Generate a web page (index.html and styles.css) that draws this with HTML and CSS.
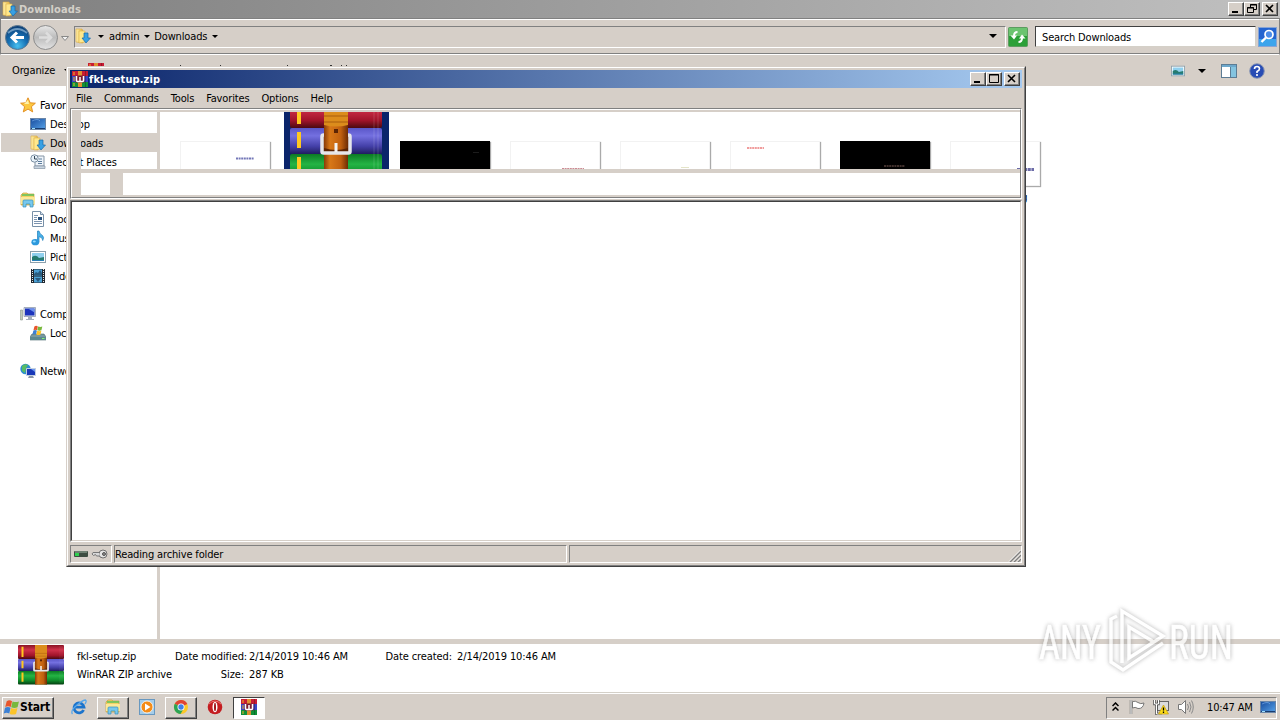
FILE: index.html
```html
<!DOCTYPE html>
<html lang="en">
<head>
    <meta charset="UTF-8">
    <meta name="viewport" content="width=device-width, initial-scale=1.0">
    <title>Downloads</title>
    <link rel="stylesheet" href="styles.css">
</head>
<body>
    <!-- shared icons -->
    <svg class="defs" width="0" height="0">
        <defs>
            <linearGradient id="gRed" x1="0" y1="0" x2="0" y2="1"><stop offset="0" stop-color="#8a1424"/><stop offset=".35" stop-color="#d0304a"/><stop offset=".75" stop-color="#a0142a"/><stop offset="1" stop-color="#4a0a10"/></linearGradient>
            <linearGradient id="gBlue" x1="0" y1="0" x2="0" y2="1"><stop offset="0" stop-color="#5a56c8"/><stop offset=".3" stop-color="#7470e0"/><stop offset=".7" stop-color="#4440a8"/><stop offset="1" stop-color="#201c60"/></linearGradient>
            <linearGradient id="gGreen" x1="0" y1="0" x2="0" y2="1"><stop offset="0" stop-color="#0c7a24"/><stop offset=".35" stop-color="#24b444"/><stop offset=".7" stop-color="#0e8a2a"/><stop offset="1" stop-color="#053c10"/></linearGradient>
            <linearGradient id="gBelt" x1="0" y1="0" x2="1" y2="0"><stop offset="0" stop-color="#8a3c08"/><stop offset=".25" stop-color="#d87818"/><stop offset=".7" stop-color="#c06010"/><stop offset="1" stop-color="#6e2c04"/></linearGradient>
            <linearGradient id="gFold" x1="0" y1="0" x2="1" y2="0"><stop offset="0" stop-color="#fff0a8"/><stop offset="1" stop-color="#e8b848"/></linearGradient>
            <linearGradient id="gScreen" x1="0" y1="0" x2="1" y2="1"><stop offset="0" stop-color="#164a9c"/><stop offset="1" stop-color="#58a4ea"/></linearGradient>
            <radialGradient id="gBack" cx=".5" cy=".85" r=".8"><stop offset="0" stop-color="#48c0f0"/><stop offset=".5" stop-color="#1670b4"/><stop offset="1" stop-color="#0c4078"/></radialGradient>
            <linearGradient id="gFwd" x1="0" y1="0" x2="0" y2="1"><stop offset="0" stop-color="#e8e8e8"/><stop offset=".5" stop-color="#bcbcbc"/><stop offset="1" stop-color="#e4e4e4"/></linearGradient>
        </defs>
        <symbol id="rar" viewBox="0 0 92 86" preserveAspectRatio="none">
            <rect width="92" height="30" rx="2" fill="url(#gRed)"/>
            <rect y="30" width="92" height="26" rx="2" fill="url(#gBlue)"/>
            <rect y="56" width="92" height="29" rx="2" fill="url(#gGreen)"/>
            <path d="M7 4h4v22H7zM7 34h4v16H7zM7 59h4v20H7z" fill="#ffc820"/>
            <path d="M84 2v80M88 2v80" stroke="#fff" stroke-opacity=".15"/>
            <path d="M34 0h24v85H34z" fill="url(#gBelt)"/>
            <rect x="32" y="37" width="28" height="18" rx="1.500" fill="#5c2404" stroke="#e6e6ea" stroke-width="3.500"/>
            <path d="M34 27h24v23q-12 4-24 0z" fill="url(#gBelt)"/>
            <path d="M34 0h24v27q-12 3-24 0z" fill="#dc8c1c"/>
            <path d="M34 18h24M34 24h24" stroke="#a85c0c"/>
            <rect x="44" y="31" width="4" height="4" fill="#5c2404"/>
            <path d="M46 45v9" stroke="#f4f4f4" stroke-width="3"/>
        </symbol>
        <symbol id="rar-s" viewBox="0 0 16 16">
            <path d="M0 0h16v5H0z" fill="#c81c34"/><path d="M0 5h16v6H0z" fill="#3a44c4"/><path d="M0 11h16v5H0z" fill="#109038"/>
            <path d="M2 1v3M2 6v4M2 12v3" stroke="#f0b828"/>
            <path d="M13.500 0v16" stroke="#000" stroke-opacity=".25"/>
            <path d="M6 0h4v16H6z" fill="#e09030"/>
            <path d="M3.500 4.500h9v7h-9z" fill="#7c1c30"/>
            <path d="M4.500 5v4.500q0 1 1 1h5q1 0 1-1V5M8 6v4" fill="none" stroke="#fff" stroke-width="1.500"/>
        </symbol>
        <symbol id="dl" viewBox="0 0 16 16">
            <path d="M1 1h6l1 2v12l-7-1z" fill="url(#gFold)" stroke="#d8a840" stroke-width=".6"/>
            <path d="M4 3h6v11l-6 1z" fill="#ffe88c" stroke="#dcb048" stroke-width=".6"/>
            <path d="M9 5h4v5h2.500l-4.500 5-4-5h2z" fill="#38a0e4" stroke="#1868a8" stroke-width=".7"/>
        </symbol>
        <symbol id="folder" viewBox="0 0 16 16">
            <path d="M1 3l2-2h4l1 1h6v11H1z" fill="#f4d264" stroke="#c8a03c" stroke-width=".7"/>
            <path d="M2 3h12" stroke="#5ac05c" stroke-width="1.500"/><path d="M1 5h14v7H1z" fill="#fce898"/>
            <path d="M3 15V9q0-1 1-1h8q1 0 1 1v6h-3v-3H6v3z" fill="#78c8ec" stroke="#3890bc" stroke-width=".7"/>
        </symbol>
        <symbol id="star" viewBox="0 0 16 16"><path d="M8 .8l2.200 5 5.200.4-4 3.500 1.300 5.200L8 12.100l-4.700 2.800 1.300-5.200-4-3.500 5.200-.4z" fill="#fcc840" stroke="#e08818" stroke-width=".9"/><path d="M8 3l1 4-5 0z" fill="#fff2a8"/></symbol>
        <symbol id="desk" viewBox="0 0 16 16"><rect x=".5" y="2.500" width="15" height="11" fill="url(#gScreen)" stroke="#6a86a8"/><path d="M1 12.500h14" stroke="#183c70"/><path d="M2 12.500h3" stroke="#9ce0ff"/><path d="M2 5q6-3 8 0" stroke="#86b8f0" fill="none" stroke-width=".6"/></symbol>
        <symbol id="recent" viewBox="0 0 16 16"><path d="M5 2h9v10H5z" fill="#eef4fa" stroke="#8494a4"/><path d="M4 12h11v2.500H4z" fill="#c8d4e0" stroke="#8494a4" stroke-width=".7"/><path d="M9 5h3M8 7.500h4M8 9.500h4" stroke="#5c7c9c"/><circle cx="4.500" cy="4.500" r="3.700" fill="#e8f2fa" stroke="#7c90a4"/><path d="M4.500 2v3H7" fill="none" stroke="#345"/></symbol>
        <symbol id="doc" viewBox="0 0 16 16"><path d="M2.500.5h8l3 3v12h-11z" fill="#fff" stroke="#7890a8"/><path d="M10.500.5v3h3" fill="#d4e0ec" stroke="#7890a8"/><path d="M4 4.500h4M4 6.500h3M4 8.500h3M4 10.500h8M4 12.500h8" stroke="#7c94b0"/><path d="M8 6h4v3H8z" fill="#28507c"/></symbol>
        <symbol id="music" viewBox="0 0 16 16"><path d="M7.500 12V1h1.500q.5 3 3.500 4.500 2 2 .2 5Q13 7.500 9 6.500V12" fill="#48b0e8" stroke="#2080bc" stroke-width=".7"/><ellipse cx="5.300" cy="12.200" rx="3.900" ry="3.100" fill="#2c98dc"/><ellipse cx="4.300" cy="11.400" rx="1.500" ry="1" fill="#94dcff"/></symbol>
        <symbol id="pic" viewBox="0 0 16 16"><rect x=".5" y="2.500" width="15" height="11" fill="#fff" stroke="#8ca0ac"/><path d="M2 4h12v8H2z" fill="#90d0ee"/><path d="M2 8q4-3 7 1l5-1v4H2z" fill="#267c70"/><path d="M2 11h12v1H2z" fill="#2880b8"/></symbol>
        <symbol id="video" viewBox="0 0 16 16"><path d="M1 1h14v14H1z" fill="#202830"/><path d="M2.500 1v14M13.500 1v14" stroke="#e4ecf0" stroke-dasharray="1 1"/><path d="M4 1.500h8v6H4zM4 8.500h8v6H4z" fill="#4aa0d4"/><path d="M4 6l2-2 2 1 2-3 2 3v2H4zM5 10l3 4 3-4z" fill="#285c80"/></symbol>
        <symbol id="comp" viewBox="0 0 16 16"><path d="M.5 4h2v10h-2z" fill="#c0ccb8" stroke="#88948c" stroke-width=".6"/><path d="M4 1.500h11.500v9H4z" fill="#dce4ee" stroke="#8490a4" stroke-width=".7"/><path d="M5 2.500h9.500v7H5z" fill="#1c34bc"/><path d="M8 2.500h6.500v4z" fill="#6c90ec"/><path d="M8 11h4v2h2v1H6v-1h2z" fill="#a4aebc"/></symbol>
        <symbol id="flagwin" viewBox="0 0 16 16"><path d="M3.500 2q2.500-1.500 5 0l-1.200 5.500q-2.500-1.500-5.200 0z" fill="#e8562c"/><path d="M9 2.300q3 1.200 6 0l-1.300 5.500q-3 1.200-6 0z" fill="#78b83c"/><path d="M1.900 8.200q2.700-1.500 5.200 0l-1.200 5.500q-2.500-1.500-5.200 0z" fill="#3c80d4"/><path d="M7.600 8.500q3 1.200 6 0L12.300 14q-3 1.200-6 0z" fill="#fcc428"/></symbol>
        <symbol id="disk" viewBox="0 0 16 16"><path d="M2 9h12l2 3v3H0v-3z" fill="#7898a0" stroke="#4c6870" stroke-width=".6"/><path d="M0 12h16v3H0z" fill="#5c8890"/><path d="M12 13.500h2.500" stroke="#84f474"/><use href="#flagwin" x="2" y="0" width="11" height="11"/></symbol>
        <symbol id="net" viewBox="0 0 16 16"><circle cx="5.500" cy="6" r="5.200" fill="#2c8cd0"/><path d="M2 3q3-3 6-1l-2 3-1 5-3-2z" fill="#58bc64"/><path d="M6.500 5.500h9v7h-9z" fill="#1838b8" stroke="#c4d0e0"/><path d="M11 6h4v3z" fill="#6c98f0"/><path d="M9 13h4l1 2H8z" fill="#8c98a8"/></symbol>
        <symbol id="ie" viewBox="0 0 16 16"><path d="M12.600 11A5 5 0 1 1 13 8.200H4.500" fill="none" stroke="#1c74cc" stroke-width="2.800"/><path d="M1.500 15Q-1 12 6 6q6-5 8.500-5 1.500 1-.5 4" fill="none" stroke="#58a8ec" stroke-width="1.300"/></symbol>
        <symbol id="wmp" viewBox="0 0 16 16"><rect x=".5" y=".5" width="15" height="15" fill="#a4cdea" stroke="#6898c0"/><circle cx="8" cy="8" r="6" fill="#f48c18" stroke="#fff" stroke-width=".8"/><path d="M6 4.500l5.500 3.500L6 11.500z" fill="#fff"/></symbol>
        <symbol id="chrome" viewBox="0 0 16 16"><circle cx="8" cy="8" r="7" fill="#fcc828"/><path d="M8 8L1.800 4.700A7 7 0 0 1 14.300 5z" fill="#e04434"/><path d="M8 8L1.800 4.700A7 7 0 0 0 7.500 15l3-5z" fill="#2ca454"/><circle cx="8" cy="8" r="3.500" fill="#fff"/><circle cx="8" cy="8" r="2.700" fill="#4080e8"/></symbol>
        <symbol id="opera" viewBox="0 0 16 16"><circle cx="8" cy="8" r="7.300" fill="#c41c20"/><path d="M2 5q6-6 12 0" fill="none" stroke="#ec7470"/><ellipse cx="8" cy="8" rx="2.500" ry="5.300" fill="#fff"/><ellipse cx="8" cy="8" rx="1" ry="4.300" fill="#a01418"/></symbol>
    </svg>

    <div class="desktop">
        <div class="explorer">
            <div class="titlebar inactive">
                <svg class="icon"><use href="#dl"/></svg>
                <span class="title">Downloads</span>
                <div class="controls">
                    <span class="ctl"><svg width="14" height="12"><path d="M3 9h6" stroke="#000" stroke-width="2"/></svg></span>
                    <span class="ctl"><svg width="14" height="12"><path d="M5.500 4V1.500h6v5H9M5 2h7M2.500 4.500h6v5h-6zM2 5h7" fill="none" stroke="#000"/></svg></span>
                    <span class="ctl close"><svg width="14" height="12"><path d="M3 2l7 7M10 2l-7 7" stroke="#000" stroke-width="1.600"/></svg></span>
                </div>
            </div>

            <div class="navbar">
                <svg class="travel" width="70" height="28">
                    <circle cx="15.500" cy="14.500" r="12" fill="url(#gBack)" stroke="#5c7890"/>
                    <path d="M6 10q9-8 19 0" stroke="#a8cce4" stroke-opacity=".6" stroke-width="2" fill="none"/>
                    <path d="M22 14.500H10M15 9.500l-5 5 5 5" fill="none" stroke="#fff" stroke-width="3"/>
                    <circle cx="43.500" cy="14.500" r="12" fill="url(#gFwd)" stroke="#8c8c8c"/>
                    <path d="M37 14.500h12M44 9.500l5 5-5 5" fill="none" stroke="#dedede" stroke-width="2.500"/>
                    <path d="M59.500 13.500h7l-3.500 4z" fill="#f4f4f4" stroke="#888"/>
                </svg>
                <div class="address">
                    <svg class="icon"><use href="#dl"/></svg>
                    <i class="arrow a1"></i>
                    <span class="crumb">admin</span>
                    <i class="arrow a2"></i>
                    <span class="crumb">Downloads</span>
                    <i class="arrow a2"></i>
                    <i class="arrow big"></i>
                </div>
                <svg class="refresh" width="20" height="20">
                    <rect x=".5" y=".5" width="19" height="19" rx="1" fill="#2ca038" stroke="#5c9c60"/><path d="M1 1h18v8H1z" fill="#6cc470"/>
                    <path d="M9.500 5Q6 5 6 9" fill="none" stroke="#fff" stroke-width="2"/><path d="M2.500 8.500h6.500L6 12.500z" fill="#fff"/>
                    <path d="M10.500 15q3.500 0 3.500-4" fill="none" stroke="#fff" stroke-width="2"/><path d="M11 11.500h6.500L14 7.500z" fill="#fff"/>
                </svg>
                <div class="search">Search Downloads</div>
                <svg class="go" width="19" height="20">
                    <rect x=".5" y=".5" width="18" height="19" fill="#2464d0" stroke="#88a4d4"/><path d="M1 12h17v7H1z" fill="#3ca4ec"/>
                    <circle cx="11" cy="7.500" r="4" fill="#4c8ce8" stroke="#fff" stroke-width="1.700"/><path d="M8 10.500L3.500 15" stroke="#fff" stroke-width="2.400"/>
                </svg>
            </div>

            <div class="toolbar">
                <span class="organize">Organize</span>
                <i class="arrow"></i>
                <svg class="icon tool-rar"><use href="#rar-s"/></svg>
                <!-- tips of the covered commands -->
                <svg width="250" height="31"><path d="M72 10.500h1M112 10.500h1M179 10.500h1M222 10.500h2M233 10.500h1M238 10.500h1" stroke="#333"/></svg>
                <div class="views">
                    <svg width="14" height="14"><use href="#pic"/></svg>
                    <i class="arrow big"></i>
                    <svg class="preview" width="16" height="14"><rect x=".5" y=".5" width="15" height="13" fill="#fff" stroke="#5c7c94"/><path d="M1 2h14" stroke="#6ca8cc" stroke-width="2"/><path d="M10 3h5v10h-5z" fill="#84c4e0"/><path d="M9.500 3v10" stroke="#5c7c94"/></svg>
                    <svg class="help" width="16" height="16"><circle cx="8" cy="8" r="7.300" fill="#284cb4" stroke="#8c98b4"/><path d="M5.500 6q0-2.500 2.500-2.500t2.500 2.300Q10.500 7.500 8 8.500V10M8 11v2" fill="none" stroke="#fff" stroke-width="1.600"/></svg>
                </div>
            </div>

            <div class="panes">
                <div class="nav">
                    <div class="row head"><svg class="icon"><use href="#star"/></svg>Favor</div>
                    <div class="row"><svg class="icon"><use href="#desk"/></svg>Desktop</div>
                    <div class="row selected"><svg class="icon"><use href="#dl"/></svg>Downloads</div>
                    <div class="row"><svg class="icon"><use href="#recent"/></svg>Recent Places</div>
                    <div class="row head gap"><svg class="icon"><use href="#folder"/></svg>Libraries</div>
                    <div class="row"><svg class="icon"><use href="#doc"/></svg>Documents</div>
                    <div class="row"><svg class="icon"><use href="#music"/></svg>Music</div>
                    <div class="row"><svg class="icon"><use href="#pic"/></svg>Pictures</div>
                    <div class="row"><svg class="icon"><use href="#video"/></svg>Videos</div>
                    <div class="row head gap"><svg class="icon"><use href="#comp"/></svg>Computer</div>
                    <div class="row"><svg class="icon"><use href="#disk"/></svg>Local Disk</div>
                    <div class="row head gap"><svg class="icon"><use href="#net"/></svg>Network</div>
                </div>
                <div class="files">
                    <div class="file"><div class="thumb"><svg width="88" height="43"><path d="M55 16.500h18" stroke="#7478b8" stroke-width="2" stroke-dasharray="2 .6"/></svg></div></div>
                    <div class="file picked"><svg width="92" height="86"><use href="#rar"/></svg></div>
                    <div class="file"><div class="thumb black"><svg width="88" height="43"><path d="M72 10.500h6" stroke="#1c1c1c"/></svg></div></div>
                    <div class="file"><div class="thumb"><svg width="88" height="43"><path d="M51 27h22" stroke="#cc8c94" stroke-width="2" stroke-dasharray="2 .6"/></svg></div></div>
                    <div class="file"><div class="thumb"><svg width="88" height="43"><path d="M60 25.500h8" stroke="#e4e4c8"/></svg></div></div>
                    <div class="file"><div class="thumb"><svg width="88" height="43"><path d="M16 6h17" stroke="#f09c9c" stroke-width="2" stroke-dasharray="2 .6"/></svg></div></div>
                    <div class="file"><div class="thumb black"><svg width="88" height="43"><path d="M43 24h21" stroke="#40302c" stroke-width="2" stroke-dasharray="2 .6"/></svg></div></div>
                    <div class="file"><div class="thumb"><svg width="88" height="43"><path d="M66 27.500h17" stroke="#6c6ca8" stroke-width="3" stroke-dasharray="3 .6"/></svg></div><span class="label">servicing.png</span></div>
                </div>
            </div>

            <div class="details">
                <svg width="46" height="40"><use href="#rar"/></svg>
                <div class="facts">
                    <span>fkl-setup.zip</span><span class="key">Date modified:</span><span class="value">2/14/2019 10:46 AM</span><span class="key">Date created:</span><span class="value">2/14/2019 10:46 AM</span>
                    <span>WinRAR ZIP archive</span><span class="key">Size:</span><span class="value">287 KB</span>
                </div>
            </div>
        </div>

        <div class="taskbar">
            <div class="start"><svg width="17" height="17"><use href="#flagwin"/></svg>Start</div>
            <div class="task flat"><svg class="icon"><use href="#ie"/></svg></div>
            <div class="task"><svg class="icon"><use href="#folder"/></svg></div>
            <div class="task flat"><svg class="icon"><use href="#wmp"/></svg></div>
            <div class="task"><svg class="icon"><use href="#chrome"/></svg></div>
            <div class="task flat"><svg class="icon"><use href="#opera"/></svg></div>
            <div class="task pressed"><svg class="icon"><use href="#rar-s"/></svg></div>
            <div class="tray">
                <svg class="chev" width="7" height="11"><path d="M.5 4l3-3 3 3M.5 8.500l3-3 3 3" fill="none" stroke="#000" stroke-width="1.500"/></svg>
                <svg class="flag" width="16" height="16"><path d="M2 1v14" stroke="#777" stroke-width="2.500"/><path d="M2 1v14" stroke="#fff"/><path d="M3.500 2.500q3-1 5.500 1t6 .5q-1 6-6 5.500-3-2-5.500-.5z" fill="#fff" stroke="#777"/></svg>
                <svg class="lan" width="16" height="16"><rect x="4.500" y="2.500" width="11" height="9" fill="#dcdcdc" stroke="#666"/><path d="M1.500 1v4h4V1M3.500 5v10h5" fill="none" stroke="#555" stroke-width="2.500"/><path d="M1.500 1v4h4V1M3.500 5v10h5" fill="none" stroke="#fff"/><path d="M10.500 6l5 9h-10z" fill="#fcdc18" stroke="#c49c10" stroke-width=".7"/><path d="M10.500 8.500v3M10.500 12.500v1.500" stroke="#000" stroke-width="1.300"/></svg>
                <svg class="vol" width="17" height="16"><path d="M1.500 5.500h3l4-4v13l-4-4h-3z" fill="#fff" stroke="#777"/><path d="M10.500 5q2 3 0 6M12.500 3q3 5 0 10M14.500 1.500q3.500 6.500 0 13" fill="none" stroke="#888"/></svg>
                <span class="clock">10:47 AM</span>
                <svg class="icon"><use href="#desk"/></svg>
            </div>
        </div>

        <!-- archive window; its toolbar is not painted yet, so that area stays see-through -->
        <div class="winrar">
            <div class="frame">
                <div class="titlebar">
                    <svg class="icon"><use href="#rar-s"/></svg>
                    <span class="title">fkl-setup.zip</span>
                    <div class="controls">
                        <span class="ctl"><svg width="14" height="12"><path d="M3 9h6" stroke="#000" stroke-width="2"/></svg></span>
                        <span class="ctl"><svg width="14" height="12"><path d="M2.500 1.500h9v8h-9zM2 2h10" fill="none" stroke="#000"/></svg></span>
                        <span class="ctl close"><svg width="14" height="12"><path d="M3 2l7 7M10 2l-7 7" stroke="#000" stroke-width="1.600"/></svg></span>
                    </div>
                </div>
                <div class="menu">
                    <span>File</span><span>Commands</span><span>Tools</span><span>Favorites</span><span>Options</span><span>Help</span>
                </div>
                <div class="rebar-edge">
                    <div class="rebar">
                        <div class="rebar-inner">
                            <div class="see-through"></div>
                            <div class="band"><div class="up"></div><div class="path"></div></div>
                        </div>
                    </div>
                </div>
                <div class="list-edge">
                    <div class="list"><div class="list-inner"></div></div>
                </div>
                <div class="status">
                    <div class="cell lock">
                        <svg width="36" height="12"><rect x="1" y="3" width="14" height="6" rx="1" fill="#3c4c40"/><path d="M2 4h12" stroke="#a0b4a4"/><rect x="2" y="5" width="4" height="3" fill="#30d050"/><circle cx="30" cy="6" r="4" fill="#e4e4e4" stroke="#707070"/><circle cx="31" cy="6" r="1.500" fill="#888" stroke="#555"/><path d="M26 4.500h-6l-1 1.500 1.500 1.500 2-1 1 1.500H27" fill="#d8d8d8" stroke="#777"/></svg>
                    </div>
                    <div class="cell message">Reading archive folder</div>
                    <div class="cell total">
                        <svg width="13" height="13"><path d="M2 13L13 2M6 13l7-7M10 13l3-3" stroke="#808080" stroke-width="1.500"/><path d="M1 12.500L12.500 1M5 12.500l8-8M9 12.500l4-4" stroke="#fff" stroke-width=".8"/></svg>
                    </div>
                </div>
            </div>
        </div>

        <svg class="watermark" width="240" height="90">
            <g class="mark">
                <text x="5" y="57" textLength="62" lengthAdjust="spacingAndGlyphs">ANY</text>
                <text x="135" y="57" textLength="64" lengthAdjust="spacingAndGlyphs">RUN</text>
                <path d="M83 14l-6 3v43l12 8 40-27M88 61V9l41 25-34 22V25l25 15"/>
            </g>
        </svg>
    </div>
</body>
</html>
```
FILE: styles.css
```css
* {
    box-sizing: border-box;
}
body {
    margin: 0;
    font-family: "DejaVu Sans Condensed", "DejaVu Sans", sans-serif;
    font-size: 11px;
    font-stretch: condensed;
    letter-spacing: -0.15px;
    color: #000;
}
svg {
    display: block;
    flex: none;
}
.defs {
    position: absolute;
}
.icon {
    width: 16px;
    height: 16px;
}
.desktop {
    position: relative;
    width: 1280px;
    height: 720px;
    overflow: hidden;
    display: flex;
    flex-direction: column;
    background: #fff;
}
.explorer {
    height: 692px;
    display: flex;
    flex-direction: column;
}

/* title bars */
.titlebar {
    height: 18px;
    flex: none;
    display: flex;
    align-items: center;
    padding: 0 2px;
    background: linear-gradient(to right, #0a246a, #a6caf0);
    color: #fff;
    font-weight: bold;
    letter-spacing: 0.1px;
}
.titlebar.inactive {
    background: linear-gradient(to right, #808080, #c0c0c0);
    color: #d4d0c8;
}
.title {
    margin-left: 1px;
}
.controls {
    display: flex;
    margin-left: auto;
}
.ctl {
    width: 16px;
    height: 14px;
    background: #d6cfc8;
    border: 1px solid;
    border-color: #fff #404040 #404040 #fff;
    box-shadow: inset -1px -1px #808080;
}
.ctl.close {
    margin-left: 2px;
}

/* explorer */
.arrow {
    width: 0;
    height: 0;
    flex: none;
    border: 3px solid transparent;
    border-top-color: #000;
    border-bottom: 0;
}
.arrow.big {
    border-width: 4px 4px 0;
}
.navbar {
    height: 37px;
    flex: none;
    display: flex;
    align-items: center;
    padding: 0 2px 0 1px;
    background: #d6cfc8;
    border: 1px solid #808080;
    border-bottom-color: #fff;
    box-shadow: inset 0 1px #fff, inset 0 -1px #808080;
}
.travel {
    margin-right: 2px;
}
.address {
    width: 932px;
    height: 22px;
    display: flex;
    align-items: center;
    padding-bottom: 1px;
    border: 1px solid;
    border-color: #808080 #fff #fff #808080;
}
.address .a1 {
    margin: 0 5px 0 7px;
}
.address .a2 {
    margin: 0 4px 0 5px;
}
.address .big {
    margin: 0 8px 0 auto;
}
.refresh {
    margin-left: 2px;
}
.search {
    width: 221px;
    height: 21px;
    margin: 0 2px 0 7px;
    padding: 4px 6px 0;
    background: #fff;
    border: 1px solid #404040;
    border-right-color: #d4d0c8;
    border-bottom-color: #d4d0c8;
}
.toolbar {
    height: 31px;
    flex: none;
    display: flex;
    align-items: center;
    padding-left: 12px;
    background: #d6cfc8;
}
.toolbar .organize {
    width: 45px;
    margin-right: 7px;
}
.tool-rar {
    margin: 0 4px 0 18px;
}
.views {
    display: flex;
    align-items: center;
    margin: 0 15px 0 auto;
}
.views .big {
    margin: 0 15px 0 13px;
}
.views .help {
    margin-left: 12px;
}
.panes {
    flex: 1;
    min-height: 0;
    display: flex;
    border-bottom: 5px solid #d6cfc8;
}
.nav {
    width: 160px;
    flex: none;
    padding: 9px 0 0 1px;
    border-right: 3px solid #d6cfc8;
}
.row {
    height: 19px;
    display: flex;
    align-items: center;
    gap: 4px;
    padding: 1px 0 0 29px;
    white-space: nowrap;
}
.row .icon {
    margin-top: -1px;
}
.row.head {
    padding-left: 19px;
}
.row.gap {
    margin-top: 19px;
}
.row.selected {
    background: #d6cfc8;
}
.files {
    flex: 1;
    display: flex;
    gap: 5px;
    align-items: flex-start;
    padding: 6px 14px;
}
.file {
    width: 105px;
    height: 128px;
    flex: none;
    display: flex;
    flex-direction: column;
    align-items: center;
    padding: 49px 3px 0 0;
}
.file.picked {
    padding: 6px 1px 0 0;
    background: #0a246a;
}
.thumb {
    width: 90px;
    height: 45px;
    border: 1px solid #f2f2f2;
    box-shadow: 1px 1px 1px #aaa;
    background: #fff;
}
.thumb.black {
    background: #000;
    border-color: #000;
}
.label {
    margin-top: 5px;
}
.details {
    height: 48px;
    flex: none;
    display: flex;
    padding: 1px 0 0 18px;
}
.facts {
    display: grid;
    grid-template-columns: 98px 69px 141px 67px 120px;
    grid-auto-rows: 18px;
    margin-left: 13px;
    padding-top: 3px;
    line-height: 18px;
    white-space: nowrap;
    letter-spacing: -0.1px;
}
.key {
    text-align: right;
}
.value {
    padding-left: 5px;
}

/* taskbar */
.taskbar {
    height: 28px;
    display: flex;
    align-items: center;
    padding: 2px 3px 0 2px;
    background: #d6cfc8;
    border-top: 1px solid #d4d0c8;
    box-shadow: inset 0 1px #fff;
}
.start {
    width: 52px;
    height: 22px;
    display: flex;
    align-items: center;
    padding-bottom: 1px;
    font-size: 12px;
    font-weight: bold;
    border: 1px solid;
    border-color: #fff #404040 #404040 #fff;
    box-shadow: inset -1px -1px #808080;
    margin-right: 9px;
}
.task {
    width: 32px;
    height: 22px;
    margin-right: 2px;
    display: flex;
    align-items: center;
    justify-content: center;
    padding-bottom: 1px;
    border: 1px solid;
    border-color: #fff #404040 #404040 #fff;
    box-shadow: inset -1px -1px #808080;
}
.task.flat {
    border-color: transparent;
    box-shadow: none;
}
.task.pressed {
    background: #fff;
    border-color: #404040 #fff #fff #404040;
    box-shadow: none;
}
.tray {
    width: 171px;
    height: 22px;
    margin-left: auto;
    display: flex;
    align-items: center;
    padding: 0 0 1px 5px;
    border: 1px solid;
    border-color: #808080 #fff #fff #808080;
}
.flag {
    margin-left: 10px;
}
.lan {
    margin-left: 8px;
}
.vol {
    margin-left: 8px;
}
.clock {
    width: 47px;
    margin: 0 6px 0 13px;
    white-space: nowrap;
}

/* archive window */
.winrar {
    position: absolute;
    left: 66px;
    top: 66px;
    width: 960px;
    height: 501px;
    display: flex;
    border: 1px solid;
    border-color: #d6cfc8 #404040 #404040 #d6cfc8;
}
.frame {
    flex: 1;
    display: flex;
    flex-direction: column;
    border: 1px solid;
    border-color: #fff #808080 #808080 #fff;
}
.winrar .titlebar {
    height: 21px;
    border: 2px solid #d6cfc8;
    border-bottom-width: 1px;
    background-origin: border-box;
}
.menu {
    height: 19px;
    flex: none;
    display: flex;
    align-items: center;
    gap: 12px;
    padding-left: 8px;
    background: #d6cfc8;
}
.rebar-edge {
    height: 92px;
    flex: none;
    border: solid #d6cfc8;
    border-width: 0 2px 1px;
}
.rebar {
    border: 1px solid;
    border-color: #808080 #fff #fff #808080;
}
.rebar-inner {
    height: 89px;
    border: 1px solid;
    border-color: #fff #808080 #808080 #fff;
}
.see-through {
    height: 63px;
    border: solid #d6cfc8;
    border-width: 2px 0 4px 9px;
}
.band {
    height: 24px;
    display: flex;
    background: #d6cfc8;
    padding: 0 0 2px 9px;
}
.up {
    width: 29px;
    margin-right: 13px;
    background: #fff;
}
.path {
    flex: 1;
    background: #fff;
}
.list-edge {
    flex: 1;
    display: flex;
    padding: 0 2px;
    background: #d6cfc8;
}
.list {
    flex: 1;
    display: flex;
    border: 1px solid;
    border-color: #808080 #fff #fff #808080;
}
.list-inner {
    flex: 1;
    background: #fff;
    border: 1px solid;
    border-color: #404040 #d6cfc8 #d6cfc8 #404040;
}
.status {
    height: 23px;
    flex: none;
    display: flex;
    gap: 2px;
    padding: 3px 2px 2px;
    background: #d6cfc8;
}
.cell {
    border: 1px solid;
    border-color: #808080 #fff #fff #808080;
}
.lock {
    width: 42px;
    padding: 2px;
}
.message {
    width: 453px;
    padding: 2px 0 0;
}
.total {
    flex: 1;
    display: flex;
    justify-content: flex-end;
    align-items: flex-end;
}

.watermark {
    position: absolute;
    left: 1034px;
    top: 602px;
}
.mark {
    fill: #fff;
    stroke: #fff;
    stroke-width: 0.6;
    font-family: Roboto, sans-serif;
    font-size: 48px;
    font-weight: 400;
    letter-spacing: 0;
    opacity: 0.75;
    filter: drop-shadow(0 0 2px #999);
}
.mark path {
    fill: none;
    stroke-width: 3.5;
}
```
